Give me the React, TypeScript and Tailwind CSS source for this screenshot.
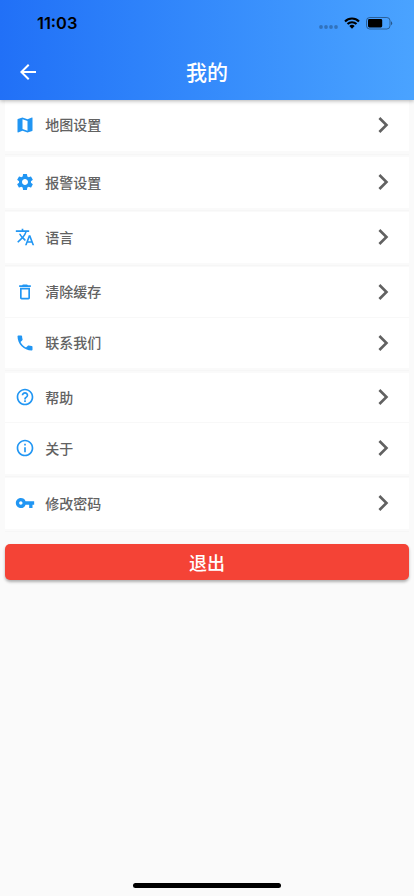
import React from "react";
import { IconType } from "react-icons";
import {
  MdArrowBack,
  MdChevronRight,
  MdDeleteOutline,
  MdHelpOutline,
  MdInfoOutline,
  MdMap,
  MdPhone,
  MdSettings,
  MdTranslate,
  MdVpnKey,
} from "react-icons/md";

interface MenuItem {
  label: string;
  icon: IconType;
}

// Each inner list is one white block of rows
const groups: MenuItem[][] = [
  [{ label: "报警设置", icon: MdSettings }],
  [{ label: "语言", icon: MdTranslate }],
  [
    { label: "清除缓存", icon: MdDeleteOutline },
    { label: "联系我们", icon: MdPhone },
  ],
  [
    { label: "帮助", icon: MdHelpOutline },
    { label: "关于", icon: MdInfoOutline },
  ],
  [{ label: "修改密码", icon: MdVpnKey }],
];

const MenuRow: React.FC<MenuItem> = ({ label, icon: Icon }) => (
  <button className="flex h-[50.5px] w-full items-center bg-white pr-[9.7px] pl-2.5 text-left">
    <Icon className="size-5 text-[#2196f3]" />
    <span className="ml-2.5 flex-1 pb-[1.6px] text-sm font-medium text-[#626262]">
      {label}
    </span>
    <MdChevronRight className="size-8 text-[#616161]" />
  </button>
);

const StatusBar: React.FC = () => (
  <div className="flex h-[46px] items-center justify-between pr-[21px] pl-[37px]">
    <span className="font-['Inter'] text-[16.4px] font-semibold text-black">
      11:03
    </span>
    <div className="flex items-center">
      <svg width="19" height="4" viewBox="0 0 19 4" className="mt-2 mr-[6px]">
        {[2, 7, 12, 17].map((x) => (
          <circle key={x} cx={x} cy="2" r="1.9" fill="#000" opacity="0.25" />
        ))}
      </svg>
      <svg width="16" height="12" viewBox="0 0 16 12" className="mr-[6px]">
        <path
          d="M1 4.4a10 10 0 0 1 14 0M3.5 7a6.5 6.5 0 0 1 9 0"
          fill="none"
          stroke="#000"
          strokeWidth="2.1"
        />
        <path d="M5.3 9.1a3.9 3.9 0 0 1 5.4 0L8 11.8z" />
      </svg>
      <svg width="27" height="13" viewBox="0 0 27 13">
        <rect
          x="0.5"
          y="0.5"
          width="23.5"
          height="11.5"
          rx="3.2"
          fill="none"
          stroke="#000"
          opacity="0.4"
        />
        <rect x="2" y="2" width="14.2" height="8.5" rx="1.4" />
        <path d="M25 4.3v4a2.3 2.3 0 0 0 0-4z" opacity="0.45" />
      </svg>
    </div>
  </div>
);

export default function App() {
  return (
    <div className="flex h-[896px] w-[414px] flex-col overflow-hidden bg-[#fafafa] font-['Noto_Sans_CJK_SC',sans-serif]">
      <header className="z-10 h-[100px] shrink-0 bg-linear-to-r from-[#2170f7] to-[#4aa3ff] shadow-[0_1px_4px_rgba(0,0,0,0.3)]">
        <StatusBar />
        <div className="grid h-[52px] grid-cols-[1fr_auto_1fr] items-center">
          <button aria-label="返回" className="ml-4 w-fit">
            <MdArrowBack className="size-6 text-white" />
          </button>
          <h1 className="text-[21px] font-medium text-white">我的</h1>
        </div>
      </header>

      <main className="flex-1 px-[5.3px]">
        <MenuRow label="地图设置" icon={MdMap} />
        <div className="mt-[3px] mb-[2.6px] h-px bg-[#f6f6f6]" />
        {groups.map((items) => (
          <div key={items[0].label}>
            <div className="divide-y divide-[#f8f8f8]">
              {items.map((item) => (
                <MenuRow key={item.label} {...item} />
              ))}
            </div>
            <div className="mt-[2px] mb-[1.5px] h-px bg-[#f6f6f6]" />
          </div>
        ))}
        <button className="mt-[10.6px] h-9 w-full rounded-[5px] bg-[#f44336] text-lg font-medium text-white shadow-[0_2px_3px_rgba(0,0,0,0.3)]">
          退出
        </button>
      </main>

      <div className="mx-auto mb-[8px] h-[5px] w-[148px] rounded-full bg-black" />
    </div>
  );
}
